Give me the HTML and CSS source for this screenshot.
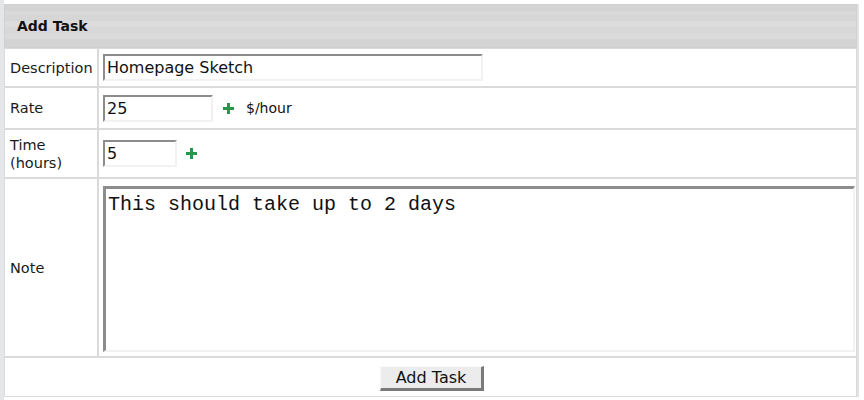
FILE: index.html
```html
<!DOCTYPE html>
<html>
<head>
<meta charset="utf-8">
<link rel="stylesheet" href="styles.css">
</head>
<body>
<div class="page">
  <table class="form">
    <tr class="r-head">
      <th colspan="2" class="head">Add Task</th>
    </tr>
    <tr class="r-desc">
      <td class="label">Description</td>
      <td class="field"><input class="text w-desc" type="text" value="Homepage Sketch"></td>
    </tr>
    <tr class="r-rate">
      <td class="label">Rate</td>
      <td class="field">
        <div class="inline">
          <input class="text w-rate" type="text" value="25">
          <svg class="plus" width="11" height="11" viewBox="0 0 11 11"><rect x="4" y="0" width="3" height="11" fill="#27964a"/><rect x="0" y="4" width="11" height="3" fill="#27964a"/></svg>
          <span class="unit">$/hour</span>
        </div>
      </td>
    </tr>
    <tr class="r-time">
      <td class="label">Time<br>(hours)</td>
      <td class="field">
        <div class="inline">
          <input class="text w-time" type="text" value="5">
          <svg class="plus" width="11" height="11" viewBox="0 0 11 11"><rect x="4" y="0" width="3" height="11" fill="#27964a"/><rect x="0" y="4" width="11" height="3" fill="#27964a"/></svg>
        </div>
      </td>
    </tr>
    <tr class="r-note">
      <td class="label">Note</td>
      <td class="field"><textarea class="note">This should take up to 2 days</textarea></td>
    </tr>
    <tr class="r-btn">
      <td colspan="2" class="actions"><button class="btn" type="button">Add Task</button></td>
    </tr>
  </table>
</div>
</body>
</html>
```
FILE: styles.css
```css
html, body {
  margin: 0;
  padding: 0;
  background: #ffffff;
}
body {
  font-family: "DejaVu Sans", sans-serif;
  color: #111;
}
.page {
  width: 857px;
  height: 400px;
  box-sizing: border-box;
  padding-top: 4px;
  border-left: 4px solid #e4e6e9;
}
.form {
  width: 855px;
  border-collapse: separate;
  border-spacing: 0;
  border-right: 2px solid #e2e2e2;
}
.form th, .form td {
  border: 1px solid #dadada;
  box-sizing: border-box;
  padding: 0;
}
.head {
  height: 44px;
  text-align: left;
  padding-left: 12px !important;
  font-size: 14px;
  font-weight: bold;
  color: #111;
  border-color: #d0d0d0 !important;
  background: linear-gradient(to bottom,
    #d4d4d4 0px, #d4d4d4 6px,
    #d9d9d9 6px, #d9d9d9 10px,
    #d6d6d6 10px, #d6d6d6 16px,
    #dcdcdc 16px, #dcdcdc 22px,
    #d8d8d8 22px, #d8d8d8 28px,
    #dadada 28px, #dadada 34px,
    #d4d4d4 34px, #d4d4d4 44px);
}
.label {
  width: 94px;
  font-size: 14.5px;
  line-height: 18px;
  padding-left: 5px !important;
  color: #1a1a1a;
}
.field {
  padding-left: 4px !important;
}
.r-desc td { height: 39px; }
.r-rate td { height: 42px; }
.r-time td { height: 49px; }
.r-note td { height: 179px; }
.r-btn td { height: 40px; }
.inline {
  display: flex;
  align-items: center;
}
.text {
  display: block;
  box-sizing: border-box;
  height: 27px;
  margin: 0;
  padding: 0 2px;
  font-family: "DejaVu Sans", sans-serif;
  font-size: 16px;
  color: #111;
  background: #fff;
  border-style: solid;
  border-width: 2px 2px 2px 2px;
  border-color: #8c8c8c #f2f2f2 #f2f2f2 #8c8c8c;
  outline: none;
}
.w-desc { width: 380px; }
.w-rate { width: 110px; }
.w-time { width: 74px; }
.r-rate .plus { margin-left: 10px; }
.r-time .plus { margin-left: 9px; }
.unit {
  margin-left: 12px;
  font-size: 14px;
}
.note {
  display: block;
  box-sizing: border-box;
  width: 752px;
  height: 166px;
  margin: 2px 0 0 0;
  padding: 4px 2px;
  resize: none;
  font-family: "Liberation Mono", monospace;
  font-size: 20px;
  line-height: 24px;
  color: #111;
  background: #fff;
  border-style: solid;
  border-width: 3px 2px 2px 3px;
  border-color: #8c8c8c #f2f2f2 #f2f2f2 #8c8c8c;
  outline: none;
}
.actions {
  text-align: center;
}
.btn {
  box-sizing: border-box;
  width: 104px;
  height: 25px;
  margin: 2px 0 0 3px;
  padding: 0;
  font-family: "DejaVu Sans", sans-serif;
  font-size: 16px;
  color: #111;
  background: #ececec;
  border-style: solid;
  border-width: 1px 3px 3px 1px;
  border-color: #f8f8f8 #7a7a7a #7a7a7a #f8f8f8;
}
```
